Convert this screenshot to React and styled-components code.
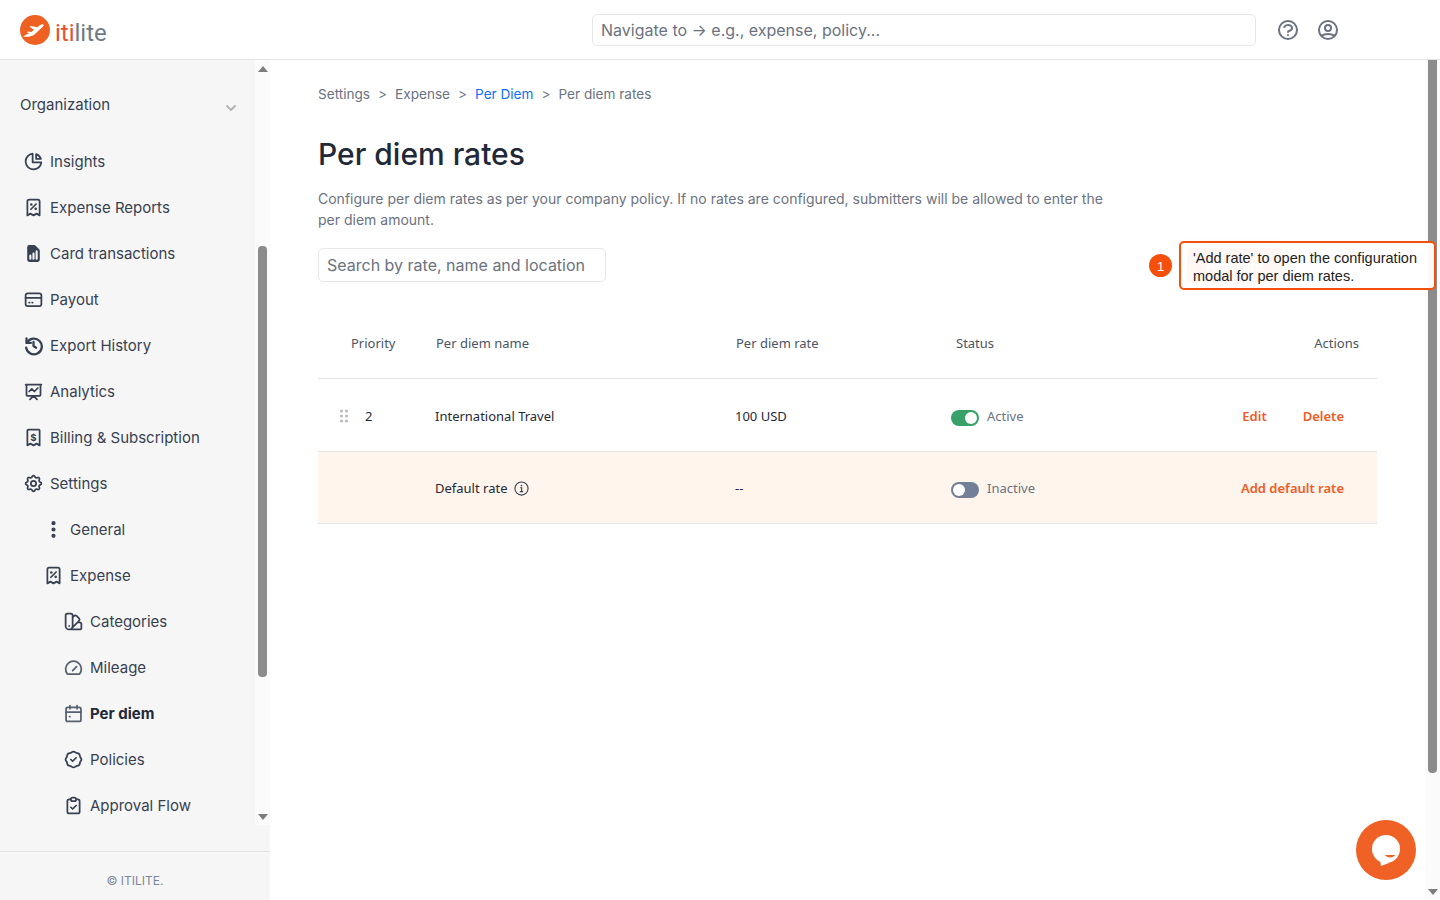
import React from "react";
import styled, { createGlobalStyle } from "styled-components";
import {
  HiOutlineChartPie,
  HiOutlineReceiptTax,
  HiDocumentReport,
  HiOutlinePresentationChartLine,
  HiOutlineCog,
  HiDotsVertical,
  HiOutlineColorSwatch,
  HiOutlineBadgeCheck,
  HiOutlineClipboardCheck,
  HiOutlineQuestionMarkCircle,
  HiOutlineUserCircle,
  HiChevronDown,
} from "react-icons/hi";

const GlobalStyle = createGlobalStyle`
  * { box-sizing: border-box; }
  html, body { margin: 0; height: 100%; overflow: hidden; background: #fff; }
  body { font-family: Inter, "Liberation Sans", sans-serif; color: #374151; }
`;

const Page = styled.div`
  width: 1440px;
  height: 900px;
  display: flex;
  flex-direction: column;
  position: relative;
`;

const Header = styled.header`
  height: 60px;
  flex: none;
  display: flex;
  align-items: center;
  border-bottom: 1px solid #e5e5e5;
  background: #fff;
`;

const Logo = styled.div`
  width: 592px;
  padding: 6px 0 0 20px;
  display: flex;
  align-items: center;
  gap: 5px;
  font-family: Roboto, sans-serif;
  font-size: 24px;
  font-weight: 400;
`;

const LogoMark = styled.svg`
  width: 30px;
  height: 30px;
  margin-top: -5px;
`;

const LogoIti = styled.span`
  color: #e8502d;
`;

const LogoLite = styled.span`
  color: #6f7a85;
`;

const NavSearch = styled.div`
  width: 664px;
  height: 32px;
  border: 1px solid #e5e7eb;
  border-radius: 5px;
  display: flex;
  align-items: center;
  padding: 0 8px;
  font-size: 16px;
  color: #6b7280;
  margin-top: 1px;
`;

const HeaderIcons = styled.div`
  display: flex;
  align-items: center;
  gap: 16px;
  margin-left: 20px;
  color: #6b7280;
  font-size: 24px;
  svg { display: block; }
`;

const Body = styled.div`
  flex: 1;
  display: flex;
  min-height: 0;
`;

const Sidebar = styled.aside`
  width: 270px;
  flex: none;
  display: flex;
  flex-direction: column;
  background: #f6f6f6;
`;

const SidebarScroll = styled.div`
  height: 765px;
  flex: none;
  display: flex;
`;

const SideList = styled.nav`
  width: 255px;
  padding-top: 35px;
`;

const OrgRow = styled.div`
  display: flex;
  align-items: flex-start;
  justify-content: space-between;
  padding: 0 14px 0 20px;
  font-size: 15px;
  line-height: 20px;
  height: 43px;
  color: #374151;
  svg { margin-top: 3px; color: #b5b5b5; font-size: 20px; }
`;

const SideItem = styled.a`
  height: 46px;
  display: flex;
  align-items: center;
  padding-left: ${(p) => 23 + p.$level * 20}px;
  gap: 6px;
  font-size: 15px;
  font-weight: ${(p) => (p.$active ? 700 : 400)};
  color: ${(p) => (p.$active ? "#1f2937" : "#374151")};
  svg { width: 21px; height: 21px; flex: none; color: #374151; }
`;

const ScrollTrack = styled.div`
  flex: none;
  width: 15px;
  background: #fbfbfb;
  display: flex;
  flex-direction: column;
  align-items: center;
  height: ${(p) => (p.$outer ? "100%" : "765px")};
`;

const ScrollThumbWrap = styled.div`
  flex: 1;
  width: 100%;
  display: flex;
  justify-content: center;
  align-items: flex-start;
`;

const ScrollThumb = styled.div`
  width: 9px;
  border-radius: ${(p) => p.$radius};
  background: #8c8c8c;
  margin-top: ${(p) => p.$top}px;
  height: ${(p) => p.$h}px;
`;

const Arrow = styled.div`
  width: 0;
  height: 0;
  flex: none;
  border-left: 5px solid transparent;
  border-right: 5px solid transparent;
  ${(p) => (p.$up ? "border-bottom" : "border-top")}: 6px solid #7d7d7d;
  margin: ${(p) => (p.$up ? "6px 0 0" : "0 0 5px")};
`;

const SideFooter = styled.div`
  flex: 1;
  display: flex;
  flex-direction: column;
  font-size: 12px;
  color: #7a8699;
`;

const FooterText = styled.div`
  margin-top: 26px;
  height: 49px;
  border-top: 1px solid #e2e2e2;
  display: flex;
  align-items: center;
  justify-content: center;
  padding-top: 9px;
`;

const Main = styled.main`
  flex: 1;
  padding: 24px 48px 0 48px;
  min-width: 0;
`;

const Crumbs = styled.div`
  display: flex;
  align-items: center;
  gap: 8px;
  font-size: 13.6px;
  line-height: 20px;
  color: #6b7280;
`;

const CrumbLink = styled.span`
  color: #0d6efd;
`;

const Title = styled.h1`
  margin: 30px 0 0;
  font-size: 30px;
  line-height: 40px;
  font-weight: 500;
  color: #1f2937;
`;

const Description = styled.p`
  margin: 14px 0 0;
  width: 800px;
  font-size: 14px;
  line-height: 21px;
  color: #6b7280;
`;

const SearchRow = styled.div`
  margin-top: 18px;
  width: 964px;
  display: flex;
  justify-content: space-between;
`;

const Search = styled.div`
  width: 288px;
  height: 34px;
  border: 1px solid #e5e7eb;
  border-radius: 5px;
  display: flex;
  align-items: center;
  padding: 0 8px;
  font-size: 16px;
  color: #6b7280;
`;

const AddButton = styled.div`
  width: 95px;
  height: 34px;
  border-radius: 4px;
  background: #f06125;
  color: #fff;
  display: flex;
  align-items: center;
  justify-content: center;
  font-size: 14px;
  font-weight: 600;
  box-shadow: 0 0 8px rgba(240, 97, 37, 0.5);
`;

const Table = styled.div`
  margin-top: 24px;
  width: 1059px;
  font-family: "Noto Sans", "Open Sans", sans-serif;
  font-size: 13px;
`;

const Row = styled.div`
  display: grid;
  grid-template-columns: 117px 300px 216px 1fr 180px;
  align-items: center;
  height: ${(p) => p.$h}px;
  padding-top: ${(p) => p.$nudge || 0}px;
  border-bottom: 1px solid #e5e5e5;
  background: ${(p) => (p.$tint ? "#fff5ec" : "transparent")};
  color: #1f2937;
`;

const HeadCell = styled.div`
  color: #4b5563;
  padding-left: ${(p) => p.$left || 1}px;
  text-align: ${(p) => (p.$right ? "right" : "left")};
  padding-right: ${(p) => (p.$right ? 18 : 0)}px;
`;

const PriorityCell = styled.div`
  display: flex;
  align-items: center;
  padding-left: 22px;
  gap: 17px;
  color: #1f2937;
`;

const DragDots = styled.svg`
  width: 8px;
  height: 14px;
  fill: #b8b8b8;
`;

const NameCell = styled.div`
  display: flex;
  align-items: center;
  gap: 7px;
`;

const InfoIcon = styled.svg`
  width: 15px;
  height: 15px;
  margin-top: 1px;
  color: #374151;
`;

const StatusCell = styled.div`
  display: flex;
  align-items: center;
  gap: 8px;
  color: #6b7280;
`;

const Toggle = styled.span`
  width: 28px;
  height: 16px;
  margin-top: 4px;
  border-radius: 8px;
  background: ${(p) => (p.$on ? "#38a169" : "#718096")};
  display: flex;
  align-items: center;
  justify-content: ${(p) => (p.$on ? "flex-end" : "flex-start")};
  padding: 0 2px;
  &::after {
    content: "";
    width: 12px;
    height: 12px;
    border-radius: 50%;
    background: #fff;
  }
`;

const ActionsCell = styled.div`
  display: flex;
  justify-content: flex-end;
  gap: 36px;
  padding-right: 33px;
`;

const Action = styled.span`
  color: #ef5b25;
  font-weight: 600;
`;

const Callout = styled.div`
  position: absolute;
  left: 1179px;
  top: 241px;
  width: 257px;
  height: 49px;
  border: 2px solid #f4500b;
  border-radius: 5px;
  background: rgba(255, 255, 255, 0.95);
  padding: 6px 12px;
  font-family: "Liberation Sans", Arial, sans-serif;
  font-size: 14.5px;
  line-height: 18px;
  color: #222;
`;

const CalloutBadge = styled.div`
  position: absolute;
  left: 1149px;
  top: 254px;
  width: 23px;
  height: 23px;
  border-radius: 50%;
  background: #f4500b;
  color: #fff;
  font-family: "Liberation Sans", Arial, sans-serif;
  font-size: 13px;
  display: flex;
  align-items: center;
  justify-content: center;
  padding-top: 2px;
`;

const ChatButton = styled.div`
  position: absolute;
  left: 1356px;
  top: 820px;
  width: 60px;
  height: 60px;
  border-radius: 50%;
  background: #f06125;
  display: flex;
  align-items: center;
  justify-content: center;
`;

const StrokeSvg = styled.svg`
  fill: none;
  stroke: currentColor;
  stroke-width: ${(p) => p.$weight || 2};
  stroke-linecap: round;
  stroke-linejoin: round;
  && { color: ${(p) => p.$tone || "#374151"}; }
`;

const ReceiptDollar = () => (
  <StrokeSvg viewBox="0 0 24 24">
    <path d="M5 21V4a1 1 0 0 1 1-1h12a1 1 0 0 1 1 1v17l-3.500-2-3.500 2-3.500-2z" />
    <text x="12" y="15.500" textAnchor="middle" fontSize="11" fontWeight="700" fill="currentColor" stroke="none" fontFamily="Inter, sans-serif">$</text>
  </StrokeSvg>
);

const Gauge = () => (
  <StrokeSvg viewBox="0 0 24 24" $tone="#556070">
    <path d="M5 19.500h14A9 9 0 1 0 5 19.500z" />
    <path d="M11 15.500l4.500-4.500" />
  </StrokeSvg>
);

const CardDots = () => (
  <StrokeSvg viewBox="0 0 24 24">
    <rect x="3" y="5" width="18" height="14.500" rx="2.500" />
    <path d="M3 10h18M7 15.500h.5M10.500 15.500h.5" />
  </StrokeSvg>
);

const History = () => (
  <StrokeSvg viewBox="0 0 24 24" $weight={2.6}>
    <path d="M4 4v5h5" />
    <path d="M4.500 9A9 9 0 1 1 3.600 14.500" />
    <path d="M12 8v4.500l3 2" />
  </StrokeSvg>
);

const Calendar = () => (
  <StrokeSvg viewBox="0 0 24 24" $tone="#556070">
    <rect x="3.500" y="5" width="17" height="16" rx="2" />
    <path d="M3.500 10.500h17M8 3v3.500M16 3v3.500M7.500 15.500h.5" />
  </StrokeSvg>
);

const items = [
  { label: "Insights", Icon: HiOutlineChartPie, level: 0 },
  { label: "Expense Reports", Icon: HiOutlineReceiptTax, level: 0 },
  { label: "Card transactions", Icon: HiDocumentReport, level: 0 },
  { label: "Payout", Icon: CardDots, level: 0 },
  { label: "Export History", Icon: History, level: 0 },
  { label: "Analytics", Icon: HiOutlinePresentationChartLine, level: 0 },
  { label: "Billing & Subscription", Icon: ReceiptDollar, level: 0 },
  { label: "Settings", Icon: HiOutlineCog, level: 0 },
  { label: "General", Icon: HiDotsVertical, level: 1 },
  { label: "Expense", Icon: HiOutlineReceiptTax, level: 1 },
  { label: "Categories", Icon: HiOutlineColorSwatch, level: 2 },
  { label: "Mileage", Icon: Gauge, level: 2 },
  { label: "Per diem", Icon: Calendar, level: 2, active: true },
  { label: "Policies", Icon: HiOutlineBadgeCheck, level: 2 },
  { label: "Approval Flow", Icon: HiOutlineClipboardCheck, level: 2 },
];

export default function App() {
  return (
    <Page>
      <GlobalStyle />
      <Header>
        <Logo>
          <LogoMark viewBox="0 0 30 30">
            <circle cx="15" cy="15" r="15" fill="#ef6123" />
            <path d="M3 21.500c4 .6 8 .2 11-1.500l9-8.500c1.200-1.200.8-2.800-1-2.200-1.500.5-3 1.700-4.500 3l-6.500-1.300-1.500.8 4.500 3-2.500 2.200-3.500-.5-1 .7 2 1.400c-2 .8-4 1.600-6 2.900z" fill="#fff" />
          </LogoMark>
          <div>
            <LogoIti>iti</LogoIti>
            <LogoLite>lite</LogoLite>
          </div>
        </Logo>
        <NavSearch>Navigate to → e.g., expense, policy...</NavSearch>
        <HeaderIcons>
          <HiOutlineQuestionMarkCircle />
          <HiOutlineUserCircle />
        </HeaderIcons>
      </Header>
      <Body>
        <Sidebar>
          <SidebarScroll>
            <SideList>
              <OrgRow>
                Organization
                <HiChevronDown />
              </OrgRow>
              {items.map(({ label, Icon, level, active }) => (
                <SideItem key={label} $level={level} $active={active}>
                  <Icon />
                  {label}
                </SideItem>
              ))}
            </SideList>
            <ScrollTrack>
              <Arrow $up />
              <ScrollThumbWrap>
                <ScrollThumb $radius="4px" $top={174} $h={431} />
              </ScrollThumbWrap>
              <Arrow />
            </ScrollTrack>
          </SidebarScroll>
          <SideFooter>
            <FooterText>© ITILITE.</FooterText>
          </SideFooter>
        </Sidebar>
        <Main>
          <Crumbs>
            <span>Settings</span>
            <span>&gt;</span>
            <span>Expense</span>
            <span>&gt;</span>
            <CrumbLink>Per Diem</CrumbLink>
            <span>&gt;</span>
            <span>Per diem rates</span>
          </Crumbs>
          <Title>Per diem rates</Title>
          <Description>
            Configure per diem rates as per your company policy. If no rates are configured, submitters will be allowed to enter the per diem amount.
          </Description>
          <SearchRow>
            <Search>Search by rate, name and location</Search>
            <AddButton>Add rate</AddButton>
          </SearchRow>
          <Table>
            <Row $h={73} $nudge={1}>
              <HeadCell $left={33}>Priority</HeadCell>
              <HeadCell>Per diem name</HeadCell>
              <HeadCell>Per diem rate</HeadCell>
              <HeadCell $left={5}>Status</HeadCell>
              <HeadCell $right>Actions</HeadCell>
            </Row>
            <Row $h={73} $nudge={1}>
              <PriorityCell>
                <DragDots viewBox="0 0 8 14">
                  {[2, 7, 12].map((y) => (
                    <g key={y}>
                      <circle cx="1.500" cy={y} r="1.500" />
                      <circle cx="6.500" cy={y} r="1.500" />
                    </g>
                  ))}
                </DragDots>
                2
              </PriorityCell>
              <NameCell>International Travel</NameCell>
              <div>100 USD</div>
              <StatusCell>
                <Toggle $on />
                Active
              </StatusCell>
              <ActionsCell>
                <Action>Edit</Action>
                <Action>Delete</Action>
              </ActionsCell>
            </Row>
            <Row $h={72} $tint>
              <div />
              <NameCell>
                Default rate
                <InfoIcon viewBox="0 0 16 16" fill="none" stroke="currentColor" strokeWidth="1.200">
                  <circle cx="8" cy="8" r="7" />
                  <path d="M6.500 7.200h1.700v4M6.200 11.300h3.600" />
                  <circle cx="8" cy="4.800" r=".9" fill="currentColor" stroke="none" />
                </InfoIcon>
              </NameCell>
              <div>--</div>
              <StatusCell>
                <Toggle />
                Inactive
              </StatusCell>
              <ActionsCell>
                <Action>Add default rate</Action>
              </ActionsCell>
            </Row>
          </Table>
        </Main>
        <ScrollTrack $outer>
          <ScrollThumbWrap>
            <ScrollThumb $radius="0 0 4px 4px" $top={0} $h={713} />
          </ScrollThumbWrap>
          <Arrow />
        </ScrollTrack>
      </Body>
      <CalloutBadge>1</CalloutBadge>
      <Callout>'Add rate' to open the configuration modal for per diem rates.</Callout>
      <ChatButton>
        <svg width="30" height="31" viewBox="0 0 30 31">
          <circle cx="15" cy="14" r="14" fill="#fff" />
          <path d="M9 25l1 6 8-3z" fill="#fff" />
          <path d="M14 20h10c-1 3.200-8.500 3.200-10 0z" fill="#f06125" />
        </svg>
      </ChatButton>
    </Page>
  );
}
